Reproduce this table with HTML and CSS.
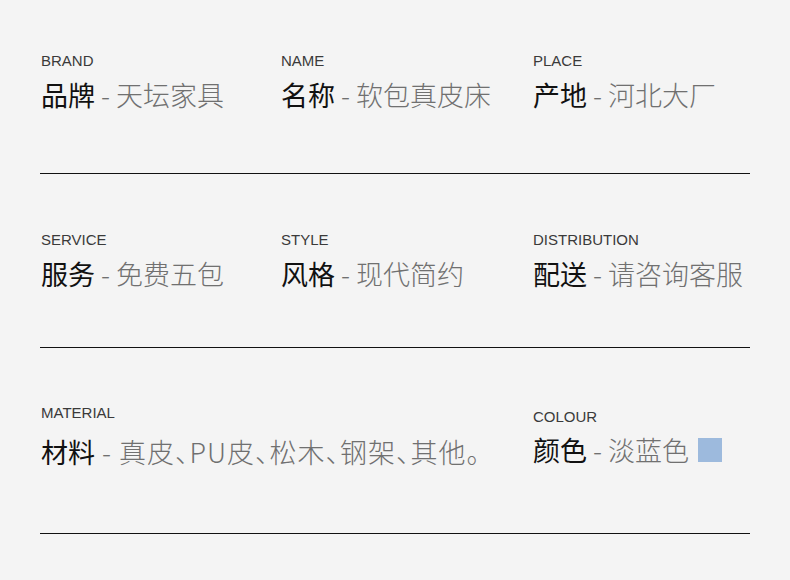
FILE: index.html
```html
<!DOCTYPE html>
<html lang="zh-CN">
<head>
<meta charset="utf-8">
<title>商品参数</title>
<link rel="stylesheet" href="styles.css">
</head>
<body>
<main class="specs">
  <section class="row row--first">
    <div class="cell">
      <div class="label">BRAND</div>
      <div class="entry"><span class="key">品牌</span><span class="value"> - 天坛家具</span></div>
    </div>
    <div class="cell">
      <div class="label">NAME</div>
      <div class="entry"><span class="key">名称</span><span class="value"> - 软包真皮床</span></div>
    </div>
    <div class="cell">
      <div class="label">PLACE</div>
      <div class="entry"><span class="key">产地</span><span class="value"> - 河北大厂</span></div>
    </div>
  </section>
  <section class="row row--second">
    <div class="cell">
      <div class="label">SERVICE</div>
      <div class="entry"><span class="key">服务</span><span class="value"> - 免费五包</span></div>
    </div>
    <div class="cell">
      <div class="label">STYLE</div>
      <div class="entry"><span class="key">风格</span><span class="value"> - 现代简约</span></div>
    </div>
    <div class="cell">
      <div class="label">DISTRIBUTION</div>
      <div class="entry"><span class="key">配送</span><span class="value"> - 请咨询客服</span></div>
    </div>
  </section>
  <section class="row row--third">
    <div class="cell cell--wide">
      <div class="label">MATERIAL</div>
      <div class="entry"><span class="key">材料</span><span class="value value--list"> - 真皮、PU皮、松木、钢架、其他。</span></div>
    </div>
    <div class="cell cell--colour">
      <div class="label">COLOUR</div>
      <div class="entry"><span class="key">颜色</span><span class="value"> - 淡蓝色</span><span class="swatch"></span></div>
    </div>
  </section>
</main>
</body>
</html>
```

FILE: styles.css
```css
html, body {
  margin: 0;
  padding: 0;
  background: #f4f4f4;
}

body {
  width: 790px;
  height: 580px;
  overflow: hidden;
  font-family: "Noto Sans CJK SC", "Noto Sans", sans-serif;
}

.specs {
  padding: 0 40px;
}

.row {
  display: grid;
  grid-template-columns: 240px 252px 1fr;
  border-bottom: 1px solid #111;
}

.row--first {
  padding: 53px 0 62px;
}

.row--second {
  padding: 58px 0 57px;
}

.row--third {
  padding: 57px 0 65px;
}

.cell {
  display: flex;
  flex-direction: column;
  gap: 10px;
  padding-left: 1px;
}

.cell--wide {
  grid-column: span 2;
  gap: 15px;
}

.cell--colour {
  padding-top: 4px;
  gap: 9px;
}

.label {
  font-family: "Liberation Sans", Arial, sans-serif;
  font-size: 15px;
  line-height: 16px;
  color: #3a3a3a;
}

.entry {
  display: flex;
  align-items: center;
  font-size: 27px;
  line-height: 32px;
  white-space: pre;
}

.key {
  color: #111;
  font-weight: 400;
}

.value {
  color: #707070;
  font-weight: 300;
}

.value--list {
  font-feature-settings: "halt";
  letter-spacing: 1px;
}

.swatch {
  width: 24px;
  height: 24px;
  margin-left: 9px;
  background: #9dbadd;
}
```
